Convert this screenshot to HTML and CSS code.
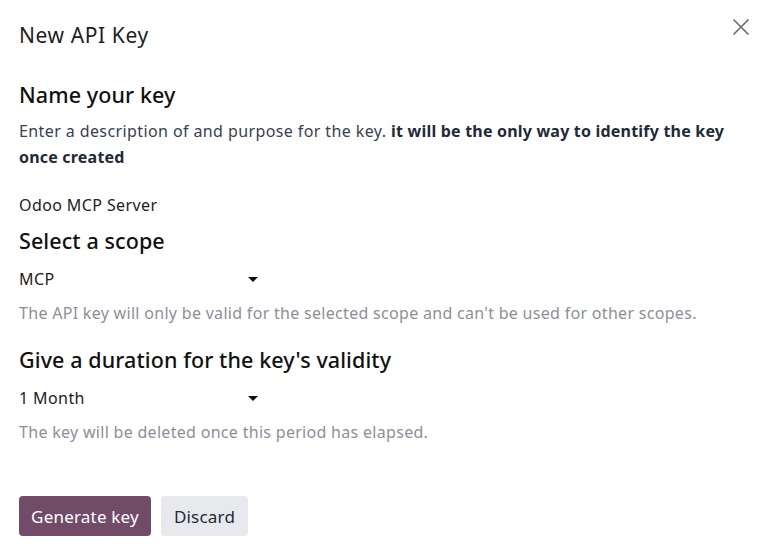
FILE: index.html
```html
<!DOCTYPE html>
<html>
<head>
<meta charset="utf-8">
<link rel="stylesheet" href="styles.css">
</head>
<body>
<div class="modal">
  <header class="modal-header">
    <h4 class="modal-title">New API Key</h4>
    <button class="btn-close" aria-label="Close">
      <svg width="18" height="18" viewBox="0 0 18 18"><path d="M1.5 1.5 L16.5 16.5 M16.5 1.5 L1.5 16.5" stroke="#6b6b6b" stroke-width="1.6" fill="none"/></svg>
    </button>
  </header>
  <main class="modal-body">
    <h3 class="sec-title first">Name your key</h3>
    <p class="desc">Enter a description of and purpose for the key. <b>it will be the only way to identify the key once created</b></p>
    <div class="field-value">Odoo MCP Server</div>
    <h3 class="sec-title s2">Select a scope</h3>
    <div class="select"><span>MCP</span><span class="caret"></span></div>
    <div class="muted m1">The API key will only be valid for the selected scope and can't be used for other scopes.</div>
    <h3 class="sec-title s3">Give a duration for the key's validity</h3>
    <div class="select"><span>1 Month</span><span class="caret"></span></div>
    <div class="muted m1">The key will be deleted once this period has elapsed.</div>
  </main>
  <footer class="modal-footer">
    <button class="btn btn-primary">Generate key</button>
    <button class="btn btn-secondary">Discard</button>
  </footer>
</div>
</body>
</html>
```
FILE: styles.css
```css
html, body { margin: 0; padding: 0; background: #fff; }
body {
  font-family: "Noto Sans", "Open Sans", sans-serif;
  color: #1f2328;
  width: 768px;
  height: 553px;
  overflow: hidden;
}
.modal { padding: 0 18px 0 19px; }
.modal-header {
  display: flex;
  justify-content: space-between;
  align-items: flex-start;
  padding-top: 20px;
}
.modal-title {
  margin: 0;
  font-size: 21px;
  line-height: 30px;
  letter-spacing: 0.6px;
  font-weight: 400;
  color: #1d1d1f;
}
.btn-close {
  border: 0;
  background: none;
  padding: 0;
  margin: -2px 0 0 0;
  width: 18px;
  height: 18px;
  cursor: pointer;
}
.modal-body { display: flex; flex-direction: column; align-items: flex-start; }
.sec-title {
  margin: 0;
  font-size: 21.5px;
  line-height: 30px;
  letter-spacing: 0.1px;
  font-weight: 500;
  color: #111;
}
.sec-title.first { margin-top: 30px; }
.desc {
  margin: 8px 0 0;
  font-size: 16px;
  line-height: 26px;
  letter-spacing: 0.4px;
  color: #374151;
  max-width: 731px;
}
.desc b { font-weight: 700; color: #1f2937; letter-spacing: 0.2px; }
.field-value {
  margin-top: 23px;
  font-size: 16px;
  line-height: 24px;
  letter-spacing: 0.4px;
  color: #222;
}
.sec-title.s2 { margin-top: 9px; }
.sec-title.s3 { margin-top: 20px; }
.select {
  margin-top: 11px;
  width: 241px;
  display: flex;
  justify-content: space-between;
  align-items: center;
  font-size: 16px;
  line-height: 24px;
  letter-spacing: 0.4px;
  color: #222;
}
.caret {
  width: 0; height: 0;
  border-left: 5px solid transparent;
  border-right: 5px solid transparent;
  border-top: 5px solid #111;
  margin-right: 2px;
}
.muted {
  margin-top: 10px;
  font-size: 16px;
  line-height: 24px;
  letter-spacing: 0.3px;
  color: #8b9099;
}
.modal-footer {
  display: flex;
  gap: 10px;
  margin-top: 52px;
}
.btn {
  height: 40px;
  border: 0;
  border-radius: 4px;
  font-family: inherit;
  font-size: 17px;
  letter-spacing: 0.2px;
  padding: 0;
}
.btn-primary { background: #714b67; color: #fff; width: 132px; }
.btn-secondary { background: #e7e9ed; color: #1f2937; width: 87px; }
```
